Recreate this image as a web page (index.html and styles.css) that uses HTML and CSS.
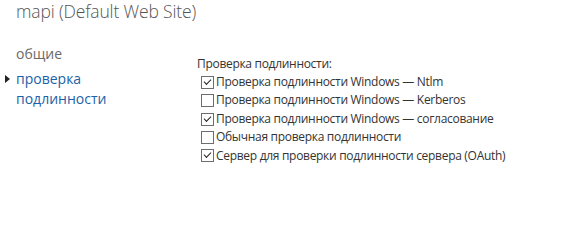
FILE: index.html
```html
<!DOCTYPE html>
<html lang="ru">
<head>
<meta charset="utf-8">
<link rel="stylesheet" href="styles.css">
</head>
<body>
<div class="page">
  <h1 class="title">mapi (Default Web Site)</h1>
  <div class="content">
    <nav class="nav">
      <div class="nav-item">общие</div>
      <div class="nav-item active"><span class="arrow"></span>проверка подлинности</div>
    </nav>
    <section class="main">
      <div class="group-label">Проверка подлинности:</div>
      <label class="opt"><span class="box checked"></span>Проверка подлинности Windows — Ntlm</label>
      <label class="opt"><span class="box"></span>Проверка подлинности Windows — Kerberos</label>
      <label class="opt"><span class="box checked"></span>Проверка подлинности Windows — согласование</label>
      <label class="opt"><span class="box"></span>Обычная проверка подлинности</label>
      <label class="opt"><span class="box checked"></span>Сервер для проверки подлинности сервера (OAuth)</label>
    </section>
  </div>
</div>
</body>
</html>
```
FILE: styles.css
```css
html, body {
  margin: 0;
  padding: 0;
  background: #fff;
}
.page {
  font-family: "Open Sans", "Noto Sans", sans-serif;
  width: 569px;
  height: 251px;
  overflow: hidden;
}
.title {
  margin: 0;
  padding: 0 0 0 16px;
  font-size: 17.5px;
  font-weight: 300;
  color: #555;
  line-height: 22px;
  letter-spacing: -0.15px;
}
.content {
  display: flex;
  margin-top: 22px;
}
.nav {
  width: 181px;
  padding-left: 16px;
  font-size: 14px;
}
.nav-item {
  color: #6a6a6a;
  line-height: 20px;
}
.nav-item.active {
  color: #1b62a8;
  position: relative;
  margin-top: 5px;
  width: 110px;
}
.arrow {
  position: absolute;
  left: -11px;
  top: 6px;
  width: 0;
  height: 0;
  border-top: 4px solid transparent;
  border-bottom: 4px solid transparent;
  border-left: 5px solid #222;
}
.main {
  padding-top: 12px;
  font-size: 12px;
  color: #333;
  letter-spacing: -0.3px;
}
.group-label {
  line-height: 16px;
  margin-bottom: 1px;
}
.opt {
  display: flex;
  align-items: center;
  line-height: 18.4px;
  padding-left: 4px;
}
.box {
  width: 11px;
  height: 11px;
  border: 1px solid #6d6d6d;
  margin-right: 2px;
  position: relative;
  flex: none;
}
.box.checked::after {
  content: "";
  position: absolute;
  left: 3px;
  top: 0px;
  width: 6px;
  height: 3px;
  border-left: 1.5px solid #222;
  border-bottom: 1.5px solid #222;
  transform: translate(-1px, 2px) rotate(-45deg);
  transform-origin: center;
}
```
